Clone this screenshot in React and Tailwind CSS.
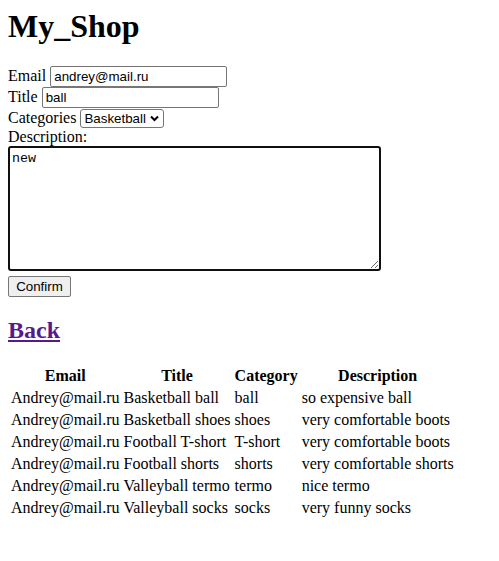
const rows = [
  ['Andrey@mail.ru', 'Basketball ball', 'ball', 'so expensive ball'],
  ['Andrey@mail.ru', 'Basketball shoes', 'shoes', 'very comfortable boots'],
  ['Andrey@mail.ru', 'Football T-short', 'T-short', 'very comfortable boots'],
  ['Andrey@mail.ru', 'Football shorts', 'shorts', 'very comfortable shorts'],
  ['Andrey@mail.ru', 'Valleyball termo', 'termo', 'nice termo'],
  ['Andrey@mail.ru', 'Valleyball socks', 'socks', 'very funny socks'],
]

const serif = "font-['Liberation_Serif','Times_New_Roman',serif]"
const sans = "font-['Liberation_Sans',Arial,sans-serif]"
const field = `${sans} h-[21px] w-[177px] rounded-[2px] border border-[#767676] bg-white px-[3px] text-[13.33px] leading-[15px] text-black outline-none`

export default function App() {
  return (
    <div className={`${serif} min-h-[561px] bg-white p-2 text-[16px] leading-[normal] text-black`}>
      <h1 className="mb-[21px] text-[32px] font-bold leading-[37px]">My_Shop</h1>

      <form onSubmit={(e) => e.preventDefault()}>
        <div className="flex h-[21px] items-baseline gap-[4px]">
          <label>Email</label>
          <input className={field} defaultValue="andrey@mail.ru" />
        </div>
        <div className="flex h-[21px] items-baseline gap-[4px]">
          <label>Title</label>
          <input className={field} defaultValue="ball" />
        </div>
        <div className="flex h-[20px] items-baseline gap-[4px]">
          <label>Categories</label>
          <div className="relative mt-[1px]">
            <select
              defaultValue="Basketball"
              className={`${sans} h-[19px] w-[84px] appearance-none rounded-[3px] border border-[#767676] bg-white pl-[3px] pr-[16px] text-[13.33px] leading-[15px] text-black outline-none`}
            >
              <option>Basketball</option>
              <option>Football</option>
              <option>Valleyball</option>
            </select>
            <svg
              className="pointer-events-none absolute right-[5px] top-[6px]"
              width="9"
              height="7"
              viewBox="0 0 9 7"
            >
              <path d="M1 1.5 L4.5 5 L8 1.5" fill="none" stroke="#000" strokeWidth="2" />
            </svg>
          </div>
        </div>
        <div className="h-[18px]">Description:</div>
        <textarea
          defaultValue="new"
          className="block h-[125px] w-[373px] rounded-[3px] border-2 border-[#101010] bg-white px-[2px] py-[3px] font-['Liberation_Mono','Courier_New',monospace] text-[13.33px] leading-[15px] text-black outline-none"
        />
        <button
          type="submit"
          className={`${sans} mt-[5px] block h-[21px] w-[63px] rounded-[2px] border border-[#767676] bg-[#efefef] text-[13.33px] leading-[15px] text-black`}
        >
          Confirm
        </button>
      </form>

      <h2 className="mb-[20px] mt-[19px] text-[24px] font-bold leading-[28px]">
        <a href="#" className="text-[#551a8b] underline">Back</a>
      </h2>

      <table className="border-separate border-spacing-[2px]">
        <thead>
          <tr>
            {['Email', 'Title', 'Category', 'Description'].map((h) => (
              <th key={h} className="p-[1px] text-center font-bold">{h}</th>
            ))}
          </tr>
        </thead>
        <tbody>
          {rows.map((r, i) => (
            <tr key={i}>
              {r.map((c, j) => (
                <td key={j} className="whitespace-nowrap p-[1px]">{c}</td>
              ))}
            </tr>
          ))}
        </tbody>
      </table>
    </div>
  )
}
